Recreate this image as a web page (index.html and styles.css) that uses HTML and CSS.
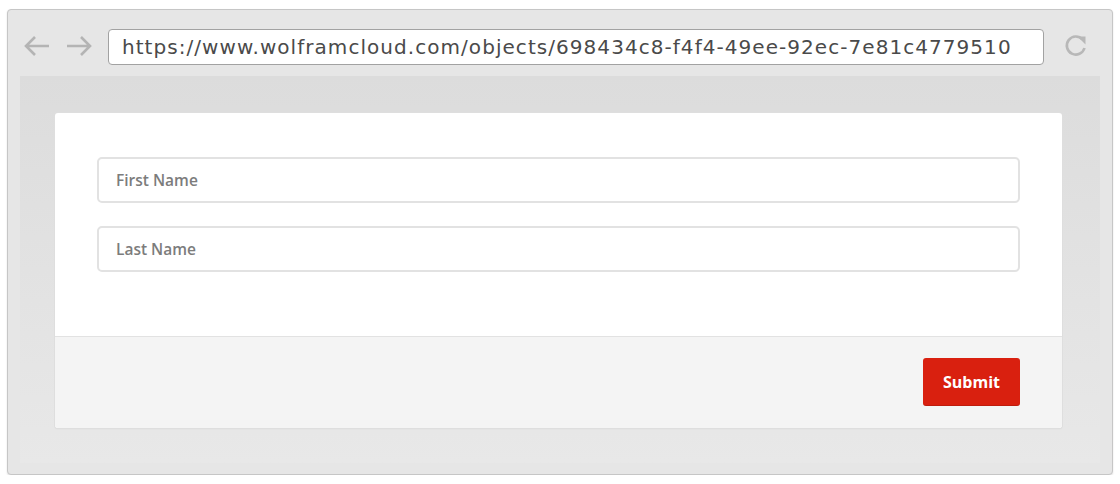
FILE: index.html
```html
<!DOCTYPE html>
<html>
<head>
<meta charset="utf-8">
<link rel="stylesheet" href="styles.css">
</head>
<body>
<div class="window">
  <div class="toolbar">
    <div class="nav">
      <svg class="arrow" width="28" height="24" viewBox="0 0 28 24"><path d="M26 12H3M12 3L3 12l9 9" fill="none" stroke="#b4b4b4" stroke-width="2.6"/></svg>
      <svg class="arrow" width="28" height="24" viewBox="0 0 28 24"><path d="M2 12h23M16 3l9 9-9 9" fill="none" stroke="#b4b4b4" stroke-width="2.6"/></svg>
    </div>
    <div class="url">https://www.wolframcloud.com/objects/698434c8-f4f4-49ee-92ec-7e81c4779510</div>
    <svg class="reload" width="26" height="26" viewBox="0 0 26 26"><path d="M19.5 6.5A9 9 0 1 0 21.5 15" fill="none" stroke="#b8b8b8" stroke-width="2.6"/><path d="M14.5 3.5h8v8z" fill="#b8b8b8"/></svg>
  </div>
  <div class="content">
    <div class="card">
      <div class="fields">
        <div class="input">First Name</div>
        <div class="input">Last Name</div>
      </div>
      <div class="footer">
        <button class="submit">Submit</button>
      </div>
    </div>
  </div>
</div>
</body>
</html>
```

FILE: styles.css
```css
html, body {
  margin: 0;
  padding: 0;
  background: #ffffff;
}
.window {
  margin: 9px 0 0 7px;
  width: 1104px;
  height: 464px;
  border: 1px solid #c6c6c6;
  border-radius: 4px;
  background: #e6e6e6;
  box-shadow: 0 1px 2px rgba(0,0,0,0.12);
  display: flex;
  flex-direction: column;
}
.toolbar {
  height: 66px;
  display: flex;
  align-items: center;
  padding: 8px 0 0 15px;
  box-sizing: border-box;
}
.nav {
  display: flex;
  gap: 14px;
  margin-right: 15px;
  margin-top: -3px;
}
.arrow { display: block; }
.url {
  width: 936px;
  height: 36px;
  box-sizing: border-box;
  border: 1px solid #a2a2a2;
  border-radius: 4px;
  background: #fff;
  padding: 0 0 0 13px;
  font-family: "DejaVu Sans", sans-serif;
  font-size: 20px;
  line-height: 34px;
  color: #4a4a4a;
  white-space: nowrap;
  overflow: hidden;
  letter-spacing: 1.05px;
}
.reload {
  display: block;
  margin-left: 19px;
  margin-top: -2px;
}
.content {
  margin: 0 12px 11px 12px;
  flex: 1;
  background: linear-gradient(#dcdcdc, #e8e8e8);
  padding: 37px 38px 34px 35px;
  box-sizing: border-box;
}
.card {
  background: #fff;
  border-radius: 3px;
  box-shadow: 0 0 0 1px #dedede, 0 1px 2px rgba(0,0,0,0.06);
  height: 315px;
  display: flex;
  flex-direction: column;
  overflow: hidden;
}
.fields {
  padding: 44px 42px 0 42px;
  display: flex;
  flex-direction: column;
  gap: 23px;
  flex: 1;
}
.input {
  height: 46px;
  box-sizing: border-box;
  border: 2px solid #e2e2e2;
  border-radius: 5px;
  padding: 0 0 0 17px;
  font-family: "Open Sans", sans-serif;
  font-weight: 600;
  font-size: 15.5px;
  line-height: 42px;
  color: #7c7c7c;
}
.footer {
  height: 92px;
  box-sizing: border-box;
  background: #f4f4f4;
  border-top: 1px solid #e2e2e2;
  display: flex;
  justify-content: flex-end;
  align-items: flex-start;
  padding: 21px 42px 0 0;
}
.submit {
  width: 97px;
  height: 48px;
  border: none;
  border-radius: 3px;
  background: #d9200f;
  color: #fff;
  font-family: "Open Sans", sans-serif;
  font-weight: 700;
  font-size: 16px;
  padding: 0;
  box-shadow: inset 0 -1px 0 rgba(0,0,0,0.12);
}
```
